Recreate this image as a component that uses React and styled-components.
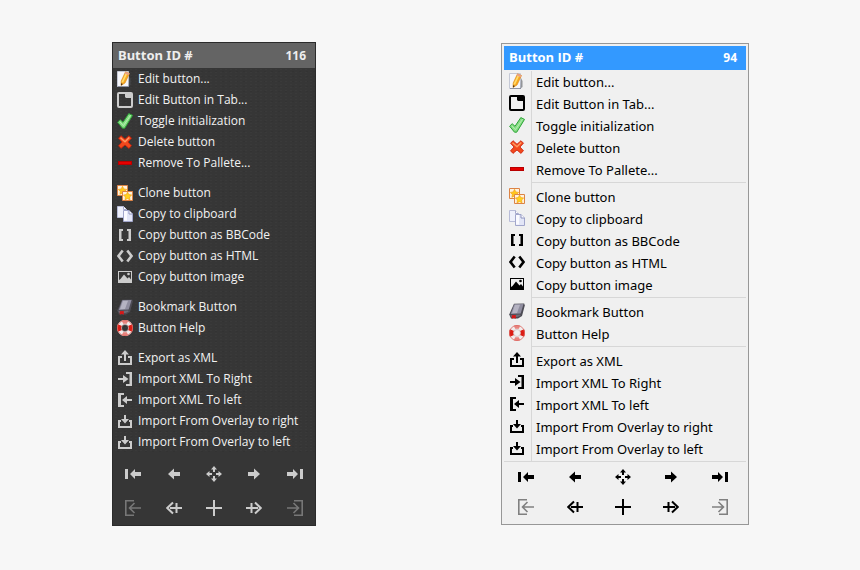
import React from 'react'
import styled, {createGlobalStyle, ThemeProvider} from 'styled-components'


const GlobalStyle = createGlobalStyle`
    * { box-sizing: border-box; }
    body {
        margin: 0;
        background: #f7f7f7;
        font-family: "Noto Sans", "Open Sans", sans-serif;
    }
`;

const darkTheme = {
    width: '204px',
    border: '#2b2b2b',
    background: '#363636',
    grain: 'radial-gradient(#3a3a3a 1px, transparent 1px) 0 0 / 5px 3px, radial-gradient(#333333 1px, transparent 1px) 2px 1px / 7px 5px',
    inset: '0px',
    headerBg: '#646464',
    headerText: '#eeeeee',
    headerHeight: '25px',
    headerGap: '0px',
    headerFont: '"Noto Sans", sans-serif',
    text: '#f2f2f2',
    icon: '#cccccc',
    cut: '#363636',
    disabled: '#777777',
    gutterLine: 'transparent',
    font: '"Open Sans", sans-serif',
    fontSize: '12px',
    lineHeight: '20px',
    rowHeight: '21px',
    rowPadding: '1px 0 0 4px',
    iconGap: '5px',
    dividerMargin: '4px 0',
    listGap: '0px',
    toolsLine: 'transparent',
    toolsPadding: '4px 0 0',
    toolHeight: '34px',
    bottom: '0px',
};

const lightTheme = {
    width: '248px',
    border: '#979797',
    background: '#f0f0f0',
    grain: 'none',
    inset: '2px',
    headerBg: '#3399ff',
    headerText: '#ffffff',
    headerHeight: '24px',
    headerGap: '1px',
    headerFont: '"Open Sans", sans-serif',
    text: '#000000',
    icon: '#000000',
    cut: '#f0f0f0',
    disabled: '#808080',
    gutterLine: '#d7d7d7',
    font: '"Noto Sans", sans-serif',
    fontSize: '13px',
    lineHeight: '22px',
    rowHeight: '22px',
    rowPadding: '0 0 2px 5px',
    iconGap: '11px',
    dividerMargin: '1px 0 3px 28px',
    listGap: '1px',
    toolsLine: '#d7d7d7',
    toolsPadding: '0 4px 0 0',
    toolHeight: '30px',
    bottom: '2px',
};

const Page = styled.main`
    display: grid;
    grid-template-columns: 1fr 1fr;
    align-items: start;
    padding: 42px 20px 20px;
`;

const Column = styled.div`
    display: flex;
    justify-content: center;
    padding: ${(props) => props.$padding};
`;

const Menu = styled.nav`
    width: ${(props) => props.theme.width};
    padding: ${(props) => props.theme.inset} 0 ${(props) => props.theme.bottom};
    border: 1px solid ${(props) => props.theme.border};
    background: ${(props) => props.theme.background};
    color: ${(props) => props.theme.text};
`;

const Header = styled.header`
    display: flex;
    align-items: center;
    justify-content: space-between;
    height: ${(props) => props.theme.headerHeight};
    margin: 0 ${(props) => props.theme.inset} ${(props) => props.theme.headerGap};
    padding: 0 9px 0 5px;
    background: ${(props) => props.theme.headerBg};
    color: ${(props) => props.theme.headerText};
    font-family: ${(props) => props.theme.headerFont};
    font-weight: bold;
`;

const Title = styled.h2`
    margin: 0;
    padding-bottom: 2px;
    font-size: 13px;
    line-height: 20px;
`;

const ButtonId = styled.span`
    font-size: 12px;
    line-height: 20px;
`;

const List = styled.ul`
    list-style: none;
    margin: 0 ${(props) => props.theme.inset};
    padding: 0 0 ${(props) => props.theme.listGap};
    background: linear-gradient(${(props) => props.theme.gutterLine}, ${(props) => props.theme.gutterLine}) 27px 0 / 1px 100% no-repeat, ${(props) => props.theme.grain};
`;

const Divider = styled.li`
    height: 1px;
    margin: ${(props) => props.theme.dividerMargin};
    background: ${(props) => props.theme.gutterLine};
`;

const Item = styled.button`
    display: flex;
    align-items: flex-start;
    gap: ${(props) => props.theme.iconGap};
    width: 100%;
    height: ${(props) => props.theme.rowHeight};
    padding: ${(props) => props.theme.rowPadding};
    border: none;
    background: none;
    color: inherit;
    font-family: ${(props) => props.theme.font};
    font-size: ${(props) => props.theme.fontSize};
    line-height: ${(props) => props.theme.lineHeight};
    text-align: left;
    white-space: nowrap;
    cursor: pointer;

    svg { margin-top: 2px; }
`;

const Tools = styled.div`
    display: grid;
    grid-template-columns: repeat(5, 1fr);
    padding: ${(props) => props.theme.toolsPadding};
`;

const ToolsLine = styled.div`
    height: 1px;
    margin: 0 ${(props) => props.theme.inset};
    background: ${(props) => props.theme.toolsLine};
`;

const Tool = styled.button`
    display: flex;
    align-items: center;
    justify-content: center;
    height: ${(props) => props.theme.toolHeight};
    padding: 0;
    border: none;
    background: none;
    cursor: pointer;
`;

const Svg = styled.svg`
    display: block;
    flex: none;
    width: 16px;
    height: 16px;
    color: ${(props) => props.$disabled ? props.theme.disabled : props.theme.icon};

    .cut { fill: ${(props) => props.theme.cut}; }
    .line { fill: none; stroke: currentColor; stroke-width: 2; }
    .thin { fill: none; stroke: currentColor; stroke-width: 1.6; }
`;

const shapes = {
    edit: <>
        <path d="M.5.5h11v15H.5z" fill="#f6f7fb" stroke="#c5c9d6" />
        <path d="M1 15.500h11" stroke="#8f94a6" />
        <path d="M12 5l1.500 3v6l-2 1.500z" fill="#55585f" opacity=".6" />
        <path d="M8.500.8l4 1.700-4.500 9.500-4 2.500.2-4.500z" fill="#f8a921" stroke="#d98414" strokeWidth=".6" />
        <path d="M8.800 2l1.500.7-4.300 9-1.500-.7z" fill="#ffdc6e" />
        <path d="M8.500.8l4 1.700-.8 1.700-4-1.700z" fill="#e9a08a" />
        <path d="M4.100 12.200l1.800.9L4 14.500z" fill="#3a2a1a" />
    </>,
    tab: <>
        <path className="line" d="M2 1h12q1 0 1 1v12q0 1-1 1H2q-1 0-1-1V2q0-1 1-1z" />
        <path d="M8 1h7v5H9L8 5z" fill="currentColor" />
    </>,
    check: <>
        <path d="M.6 9.200l2.600-2.500 2.800 2.600L11.800.6l3.700 1.800-7.800 12.800H5.500z" fill="#86dc84" stroke="#2ca436" strokeLinejoin="round" />
        <path d="M2.800 8.800l3.600 3.900 7.200-10.500" fill="none" stroke="#b5efb0" />
    </>,
    remove: <>
        <path d="M1.500 4.300L4 1.700 8 5.200 12 1.700l2.500 2.500L11 8l3.500 3.800-2.600 2.600L8 11l-4 3.400-2.500-2.600L5 8z" fill="#f2491d" stroke="#c81c08" strokeWidth=".8" strokeLinejoin="round" />
        <path d="M3.500 3.700l4.500 4L12.300 3.500" fill="none" stroke="#ff9a62" strokeWidth="1.400" />
    </>,
    minus: <>
        <path d="M1 6h14v4H1z" fill="#b80000" />
        <path d="M2 7h12v2H2z" fill="#e60000" />
    </>,
    clone: <>
        <path d="M.5.5h10v10H.5z" fill="#fff2dd" stroke="#dc8345" />
        <path d="M5.500 1.300l1.300 2.600 2.900.5-2.100 2 .4 2.900-2.500-1.300-2.600 1.300.4-2.900-2-2 2.900-.5z" fill="#ffc61c" stroke="#f09a12" strokeWidth=".6" />
        <path d="M5.500 6.500h10v9h-10z" fill="#fff2dd" stroke="#dc8345" />
        <path d="M10.500 7l1.300 2.600 2.900.4-2.100 2 .4 2.900-2.500-1.300L8 14.900l.4-2.900-2-2 2.900-.4z" fill="#ffd21e" stroke="#f09a12" strokeWidth=".6" />
    </>,
    copy: <>
        <path d="M.5.5h6l3 3v8h-9z" fill="#eef0fb" stroke="#b8bcd8" />
        <path d="M6.500.5v3h3" fill="#fff" stroke="#a5a9cc" />
        <path d="M6.500 4.500h5.500l3.500 3.500v7.500h-9z" fill="#e3e6f7" stroke="#a1a6cb" />
        <path d="M7 5h3v9.500H7z" fill="#fafaff" />
        <path d="M12 4.500V8h3.500" fill="#fff" stroke="#8d92bd" />
    </>,
    brackets: <path d="M2 2h4v2H4.500v8H6v2H2zM14 2h-4v2h1.500v8H10v2h4z" fill="currentColor" />,
    code: <path d="M5.700 2.500L1.500 8l4.200 5.500M10.300 2.500L14.500 8l-4.200 5.500" fill="none" stroke="currentColor" strokeWidth="2.600" />,
    image: <>
        <path d="M1 2h14v12H1z" fill="currentColor" />
        <path className="cut" d="M2 3h12v7.500L12 8l-1.500 1.500L7 5.500 3.500 10 2 11z" />
        <circle cx="11.500" cy="5" r="1.300" fill="currentColor" />
    </>,
    book: <>
        <path d="M5 .8l10.200-.3.600 2-2.800 10.500L9 15.500H2L.2 11.500z" fill="#4d4c55" />
        <path d="M5.300 1.200l9.200-.2-2.800 9.500-10 .5z" fill="#8f8d9f" />
        <path d="M6 1.800l5-.1L8 10l-5 .3z" fill="#b5b3c2" />
        <path d="M1.500 12l9.500-.6.700 1.100L8.500 14H2.300z" fill="#6e6c76" />
        <path d="M2.800 12.200l4-.2v3.800l-2-.8-2 .8z" fill="#d51717" />
    </>,
    help: <>
        <circle cx="8" cy="8" r="5.700" fill="none" stroke="#f1ecec" strokeWidth="4.600" />
        <path d="M1 4.200A8 8 0 0 0 1 11.800L5 10A3.500 3.500 0 0 1 5 6zM15 4.200A8 8 0 0 1 15 11.800L11 10A3.500 3.500 0 0 0 11 6z" fill="#dc1c14" />
        <path d="M4.800.7A8 8 0 0 1 11.200.7L9.800 3.800H6.200zM4.800 15.300A8 8 0 0 0 11.200 15.300L9.800 12.200H6.200z" fill="#e8837d" />
        <circle cx="8" cy="8" r="7.600" fill="none" stroke="#dd6b64" strokeWidth=".8" />
        <circle cx="8" cy="8" r="3.500" fill="none" stroke="#c9a9a9" strokeWidth=".6" />
    </>,
    export: <>
        <path className="line" d="M5 7H2v7h12V7h-3" />
        <path d="M8 0l4 4.500H9V11H7V4.500H4z" fill="currentColor" />
    </>,
    importRight: <>
        <path className="line" d="M9 2h5v12H9" />
        <path d="M12.500 1H15v14h-2.500zM1 7h5V4l5.500 4L6 12V9H1z" fill="currentColor" />
    </>,
    importLeft: <>
        <path className="line" d="M7 2H2v12h5" />
        <path d="M1 1h3v14H1zM15 7h-5V4L5 8l5 4V9h5z" fill="currentColor" />
    </>,
    overlay: <>
        <path className="line" d="M2 7v7h12V7" />
        <path d="M1 7h3v2H1zM12 7h3v2h-3zM7 2h2v4h3l-4 4.500L4 6h3z" fill="currentColor" />
    </>,
    first: <path d="M0 3h3v10H0zM5 8l5-5v3h6v4h-6v3z" fill="currentColor" />,
    prev: <path d="M2 8l6-5.500V6h6v4H8v3.500z" fill="currentColor" />,
    move: <path d="M8 0l3 3.500H9V6H7V3.500H5zM8 16l3-3.500H9V10H7v2.500H5zM0 8l3.500-3v2H6v2H3.500v2zM16 8l-3.500-3v2H10v2h2.500v2z" fill="currentColor" />,
    next: <path d="M14 8L8 2.500V6H2v4h6v3.500z" fill="currentColor" />,
    last: <path d="M16 3h-3v10h3zM11 8L6 3v3H0v4h6v3z" fill="currentColor" />,
    outLeft: <path className="thin" d="M9 .8H.8v14.400H9M16 8H4M9.500 3L4.500 8l5 5" />,
    addLeft: <path d="M7 2.500L1.300 8 7 13.500M4 8h12M10.500 3v10" fill="none" stroke="currentColor" strokeWidth="2" />,
    plus: <path className="line" d="M8 0v16M0 8h16" />,
    addRight: <path d="M9 2.500L14.700 8 9 13.500M12 8H0M5.500 3v10" fill="none" stroke="currentColor" strokeWidth="2" />,
    outRight: <path className="thin" d="M7 .8h8.200v14.400H7M0 8h12M6.500 3l5 5-5 5" />,
};

const groups = [
    [
        ['edit', 'Edit button...'],
        ['tab', 'Edit Button in Tab...'],
        ['check', 'Toggle initialization'],
        ['remove', 'Delete button'],
        ['minus', 'Remove To Pallete...'],
    ],
    [
        ['clone', 'Clone button'],
        ['copy', 'Copy to clipboard'],
        ['brackets', 'Copy button as BBCode'],
        ['code', 'Copy button as HTML'],
        ['image', 'Copy button image'],
    ],
    [
        ['book', 'Bookmark Button'],
        ['help', 'Button Help'],
    ],
    [
        ['export', 'Export as XML'],
        ['importRight', 'Import XML To Right'],
        ['importLeft', 'Import XML To left'],
        ['overlay', 'Import From Overlay to right'],
        ['overlay', 'Import From Overlay to left'],
    ],
];

const tools = [
    ['first', 'Move to start'],
    ['prev', 'Move left'],
    ['move', 'Move'],
    ['next', 'Move right'],
    ['last', 'Move to end'],
    ['outLeft', 'Send left'],
    ['addLeft', 'Add to the left'],
    ['plus', 'Add'],
    ['addRight', 'Add to the right'],
    ['outRight', 'Send right'],
];

const Icon = ({name, disabled}) => (
    <Svg viewBox="0 0 16 16" aria-hidden="true" $disabled={disabled}>{shapes[name]}</Svg>
)

const ContextMenu = ({id, theme}) => (
    <ThemeProvider theme={theme}>
        <Menu>
            <Header>
                <Title>Button ID #</Title>
                <ButtonId>{id}</ButtonId>
            </Header>
            <List>
                {groups.map((group, i) => (
                    <React.Fragment key={i}>
                        {i > 0 && <Divider role="separator" />}
                        {group.map(([icon, label]) => (
                            <li key={label}>
                                <Item type="button"><Icon name={icon} />{label}</Item>
                            </li>
                        ))}
                    </React.Fragment>
                ))}
            </List>
            <ToolsLine />
            <Tools>
                {tools.map(([name, label]) => {
                    const disabled = name.startsWith('out')
                    return (
                        <Tool key={name} type="button" aria-label={label} disabled={disabled}>
                            <Icon name={name} disabled={disabled} />
                        </Tool>
                    )
                })}
            </Tools>
        </Menu>
    </ThemeProvider>
)

const App = () => (
    <>
        <GlobalStyle />
        <Page>
            <Column $padding="0 22px 0 0"><ContextMenu id={116} theme={darkTheme} /></Column>
            <Column $padding="1px 20px 0 0"><ContextMenu id={94} theme={lightTheme} /></Column>
        </Page>
    </>
)

export default App
